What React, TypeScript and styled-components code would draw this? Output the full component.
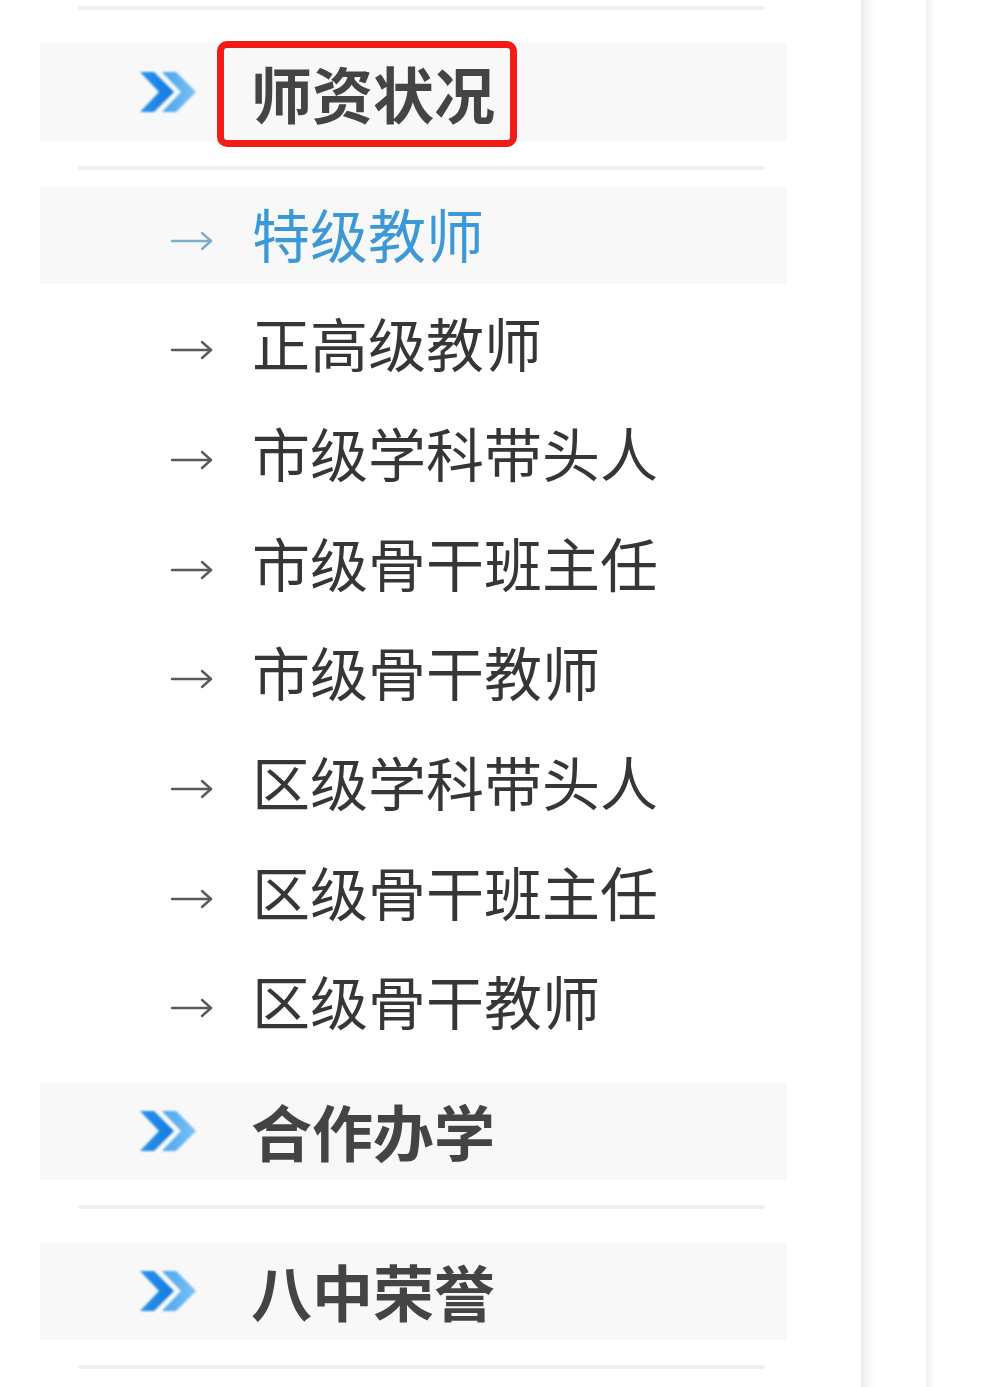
import React from "react";
import styled, { createGlobalStyle } from "styled-components";

const GlobalStyle = createGlobalStyle`
  html, body {
    margin: 0;
    padding: 0;
    background: #ffffff;
  }
  body {
    font-family: "Noto Sans CJK SC", "Noto Sans", sans-serif;
  }
`;

const Page = styled.div`
  display: flex;
  align-items: stretch;
  width: 1002px;
  height: 1387px;
  overflow: hidden;
  background: #fff;
`;

const Sidebar = styled.nav`
  display: flex;
  flex-direction: column;
  width: 747px;
  margin-left: 40px;
  padding-top: 6px;
`;

const Line = styled.div<{ $top?: number }>`
  height: 4px;
  margin: ${(p) => p.$top ?? 0}px 22px 0 38px;
  background: #efefef;
  border-radius: 2px;
`;

const Header = styled.div<{ $top: number }>`
  display: flex;
  align-items: center;
  height: 98px;
  margin-top: ${(p) => p.$top}px;
  padding-left: 99px;
  background: #f8f8f8;
`;

const ChevronBox = styled.div`
  width: 58px;
  height: 44px;
  flex: none;
  display: flex;
`;

const HeaderTitle = styled.span<{ $marked?: boolean }>`
  position: relative;
  margin-left: 54px;
  font-size: 61px;
  font-weight: 700;
  color: #444444;
  line-height: 1;
  white-space: nowrap;
  &::after {
    content: "";
    display: ${(p) => (p.$marked ? "block" : "none")};
    position: absolute;
    left: -34px;
    right: -22px;
    top: -21px;
    bottom: -24px;
    border: 7px solid #f01c18;
    border-radius: 10px;
  }
`;

const SubList = styled.ul`
  list-style: none;
  margin: 17px 0 0 0;
  padding: 0;
  display: flex;
  flex-direction: column;
  gap: 12.7px;
`;

const SubItem = styled.li<{ $active?: boolean }>`
  display: flex;
  align-items: center;
  height: 97px;
  padding-left: 130px;
  background: ${(p) => (p.$active ? "#f8f8f8" : "transparent")};
`;

const ArrowBox = styled.div`
  width: 44px;
  height: 20px;
  flex: none;
  display: flex;
  margin-top: 10px;
`;

const SubText = styled.span<{ $active?: boolean }>`
  margin-left: 38px;
  margin-bottom: 6px;
  font-size: 58px;
  font-weight: 400;
  line-height: 1;
  color: ${(p) => (p.$active ? "#3c98d6" : "#363636")};
  white-space: nowrap;
`;

const Rail = styled.div<{ $left: number; $width: number; $tone: string }>`
  flex: none;
  margin-left: ${(p) => p.$left}px;
  width: ${(p) => p.$width}px;
  background: linear-gradient(to right, ${(p) => p.$tone}, #fbfbfb 70%, #ffffff);
`;

const DoubleChevron: React.FC = () => (
  <svg width="58" height="44" viewBox="0 0 58 44">
    <defs>
      <linearGradient id="chevA" x1="0" y1="0" x2="1" y2="0">
        <stop offset="0" stopColor="#2e93ea" />
        <stop offset="1" stopColor="#1379e0" />
      </linearGradient>
      <linearGradient id="chevB" x1="0" y1="0" x2="1" y2="0">
        <stop offset="0" stopColor="#4aa6ee" />
        <stop offset="1" stopColor="#7cc0f4" />
      </linearGradient>
      <filter id="soft" x="-10%" y="-10%" width="120%" height="120%">
        <feGaussianBlur stdDeviation="0.9" />
      </filter>
    </defs>
    <g filter="url(#soft)">
      <polygon points="23,2 37,2 57,22 37,42 23,42 42,22" fill="url(#chevB)" />
      <polygon points="1,2 15,2 35,22 15,42 1,42 20,22" fill="url(#chevA)" />
    </g>
  </svg>
);

const Arrow: React.FC<{ active?: boolean }> = ({ active }) => {
  const c = active ? "#7fadcc" : "#5a5a5a";
  return (
    <svg width="44" height="20" viewBox="0 0 44 20">
      <g fill="none" stroke={c} strokeWidth="2.4" strokeLinecap="round" strokeLinejoin="round">
        <line x1="2" y1="10" x2="41" y2="10" />
        <polyline points="32,2 41,10 32,18" />
      </g>
    </svg>
  );
};

const subItems = [
  "特级教师",
  "正高级教师",
  "市级学科带头人",
  "市级骨干班主任",
  "市级骨干教师",
  "区级学科带头人",
  "区级骨干班主任",
  "区级骨干教师",
];

const SectionHeader: React.FC<{ title: string; top: number; marked?: boolean }> = ({
  title,
  top,
  marked,
}) => (
  <Header $top={top}>
    <ChevronBox>
      <DoubleChevron />
    </ChevronBox>
    <HeaderTitle $marked={marked}>{title}</HeaderTitle>
  </Header>
);

export default function App() {
  return (
    <Page>
      <GlobalStyle />
      <Sidebar>
        <Line />
        <SectionHeader title="师资状况" top={33} marked />
        <Line $top={25} />
        <SubList>
          {subItems.map((t, i) => (
            <SubItem key={t} $active={i === 0}>
              <ArrowBox>
                <Arrow active={i === 0} />
              </ArrowBox>
              <SubText $active={i === 0}>{t}</SubText>
            </SubItem>
          ))}
        </SubList>
        <SectionHeader title="合作办学" top={30} />
        <Line $top={25} />
        <SectionHeader title="八中荣誉" top={33} />
        <Line $top={25} />
      </Sidebar>
      <Rail $left={74} $width={16} $tone="#ececec" />
      <Rail $left={49} $width={9} $tone="#f0f0f0" />
    </Page>
  );
}
